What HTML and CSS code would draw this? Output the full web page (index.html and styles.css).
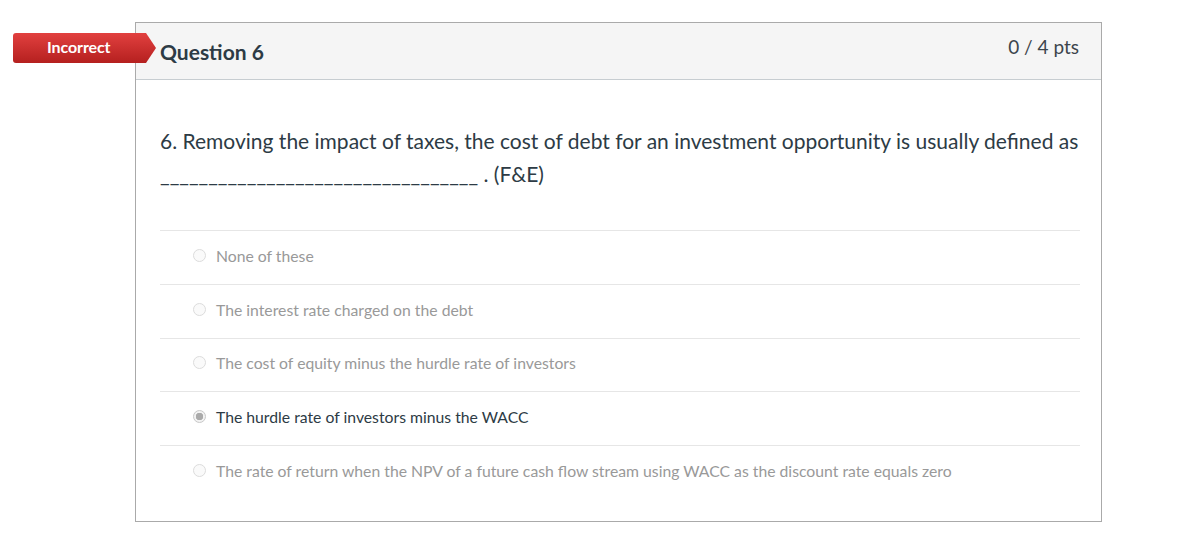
FILE: index.html
```html
<!DOCTYPE html>
<html lang="en">
<head>
    <meta charset="UTF-8">
    <title>Question 6</title>
    <link rel="stylesheet" href="styles.css">
</head>
<body>
    <div class="page">
        <div class="question">
            <div class="answer-tag">Incorrect</div>
            <div class="header">
                <span class="title">Question 6</span>
                <span class="points">0 / 4 pts</span>
            </div>
            <div class="content">
                <p class="question-text">6. Removing the impact of taxes, the cost of debt for an investment opportunity is usually defined as _________________________________ . (F&amp;E)</p>
                <div class="answers">
                    <div class="answer"><span class="radio"></span><span>None of these</span></div>
                    <div class="answer"><span class="radio"></span><span>The interest rate charged on the debt</span></div>
                    <div class="answer"><span class="radio"></span><span>The cost of equity minus the hurdle rate of investors</span></div>
                    <div class="answer selected"><span class="radio"></span><span>The hurdle rate of investors minus the WACC</span></div>
                    <div class="answer"><span class="radio"></span><span>The rate of return when the NPV of a future cash flow stream using WACC as the discount rate equals zero</span></div>
                </div>
            </div>
        </div>
    </div>
</body>
</html>
```

FILE: styles.css
```css
* {
    margin: 0;
    padding: 0;
    box-sizing: border-box;
}

body {
    font-family: Lato, 'Open Sans', sans-serif;
    background: white;
    color: #2d3b45;
}

.page {
    padding: 22px 0 0 135px;
}

.question {
    position: relative;
    width: 967px;
    border: 1px solid #aaa;
}

.answer-tag {
    position: absolute;
    left: -123px;
    top: 10px;
    width: 143px;
    height: 30px;
    padding-left: 34px;
    line-height: 28px;
    font-size: 16px;
    font-weight: 700;
    color: white;
    background: linear-gradient(#e2403f, #b5201f);
    border-radius: 3px 0 0 3px;
    clip-path: polygon(0 0, 133px 0, 143px 15px, 133px 30px, 0 30px);
    letter-spacing: -0.1px;
}

.header {
    display: flex;
    justify-content: space-between;
    height: 57px;
    padding: 0 22px 0 24px;
    background: #f5f5f5;
    border-bottom: 1px solid #c7cdd1;
}

.title {
    font-size: 21px;
    font-weight: 700;
    padding-top: 16px;
}

.points {
    font-size: 19px;
    padding-top: 12px;
    color: #3d454c;
}

.content {
    padding: 44px 21px 22px 24px;
}

.question-text {
    font-size: 21px;
    line-height: 33px;
    margin-bottom: 40px;
}

.answer {
    display: flex;
    align-items: center;
    gap: 10px;
    height: 53.75px;
    padding-left: 33px;
    border-top: 1px solid #e6e6e6;
    font-size: 15.75px;
    color: #999;
    padding-bottom: 4px;
}

.radio {
    width: 13px;
    height: 13px;
    border: 1px solid #dcdcdc;
    border-radius: 50%;
    background: #fafafa;
}

.answer.selected {
    color: #2d3b45;
}

.answer.selected .radio {
    border-color: #c8c8c8;
    background: radial-gradient(circle, #aaa 0 3.5px, #f2f2f2 4px);
}
```
